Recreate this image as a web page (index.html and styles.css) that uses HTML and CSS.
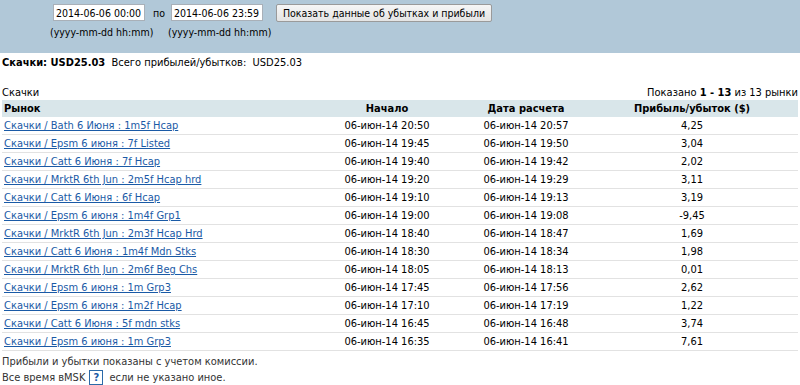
FILE: index.html
```html
<!DOCTYPE html>
<html lang="ru">
<head>
<meta charset="utf-8">
<title>Прибыли и убытки</title>
<link rel="stylesheet" href="styles.css">
</head>
<body>
<div class="band">
  <form class="filter">
    <input class="date" type="text" value="2014-06-06 00:00">
    <span class="sep">по</span>
    <input class="date" type="text" value="2014-06-06 23:59">
    <button class="btn" type="button">Показать данные об убытках и прибыли</button>
    <span class="hint">(yyyy-mm-dd hh:mm)</span>
    <span></span>
    <span class="hint">(yyyy-mm-dd hh:mm)</span>
    <span></span>
  </form>
</div>
<div class="content">
  <div class="summary"><b>Скачки: USD25.03</b>&nbsp; Всего прибылей/убытков:&nbsp; USD25.03</div>
  <div class="caption"><span>Скачки</span><span>Показано <b>1 - 13</b> из 13 рынки</span></div>
  <table class="grid">
    <colgroup><col class="c1"><col class="c2"><col class="c3"><col class="c4"></colgroup>
    <thead>
      <tr><th class="l">Рынок</th><th>Начало</th><th>Дата расчета</th><th>Прибыль/убыток ($)</th></tr>
    </thead>
    <tbody>
      <tr><td class="l"><a href="#">Скачки / Bath 6 Июня : 1m5f Hcap</a></td><td>06-июн-14 20:50</td><td>06-июн-14 20:57</td><td>4,25</td></tr>
      <tr><td class="l"><a href="#">Скачки / Epsm 6 июня : 7f Listed</a></td><td>06-июн-14 19:45</td><td>06-июн-14 19:50</td><td>3,04</td></tr>
      <tr><td class="l"><a href="#">Скачки / Catt 6 Июня : 7f Hcap</a></td><td>06-июн-14 19:40</td><td>06-июн-14 19:42</td><td>2,02</td></tr>
      <tr><td class="l"><a href="#">Скачки / MrktR 6th Jun : 2m5f Hcap hrd</a></td><td>06-июн-14 19:20</td><td>06-июн-14 19:29</td><td>3,11</td></tr>
      <tr><td class="l"><a href="#">Скачки / Catt 6 Июня : 6f Hcap</a></td><td>06-июн-14 19:10</td><td>06-июн-14 19:13</td><td>3,19</td></tr>
      <tr><td class="l"><a href="#">Скачки / Epsm 6 июня : 1m4f Grp1</a></td><td>06-июн-14 19:00</td><td>06-июн-14 19:08</td><td>-9,45</td></tr>
      <tr><td class="l"><a href="#">Скачки / MrktR 6th Jun : 2m3f Hcap Hrd</a></td><td>06-июн-14 18:40</td><td>06-июн-14 18:47</td><td>1,69</td></tr>
      <tr><td class="l"><a href="#">Скачки / Catt 6 Июня : 1m4f Mdn Stks</a></td><td>06-июн-14 18:30</td><td>06-июн-14 18:34</td><td>1,98</td></tr>
      <tr><td class="l"><a href="#">Скачки / MrktR 6th Jun : 2m6f Beg Chs</a></td><td>06-июн-14 18:05</td><td>06-июн-14 18:13</td><td>0,01</td></tr>
      <tr><td class="l"><a href="#">Скачки / Epsm 6 июня : 1m Grp3</a></td><td>06-июн-14 17:45</td><td>06-июн-14 17:56</td><td>2,62</td></tr>
      <tr><td class="l"><a href="#">Скачки / Epsm 6 июня : 1m2f Hcap</a></td><td>06-июн-14 17:10</td><td>06-июн-14 17:19</td><td>1,22</td></tr>
      <tr><td class="l"><a href="#">Скачки / Catt 6 Июня : 5f mdn stks</a></td><td>06-июн-14 16:45</td><td>06-июн-14 16:48</td><td>3,74</td></tr>
      <tr><td class="l"><a href="#">Скачки / Epsm 6 июня : 1m Grp3</a></td><td>06-июн-14 16:35</td><td>06-июн-14 16:41</td><td>7,61</td></tr>
    </tbody>
  </table>
  <div class="notes">
    <div class="note">Прибыли и убытки показаны с учетом комиссии.</div>
    <div class="note"><span>Все время вMSK</span><span class="help">?</span><span>если не указано иное.</span></div>
  </div>
</div>
</body>
</html>
```
FILE: styles.css
```css
html, body {
  margin: 0;
  padding: 0;
  background: #ffffff;
}
body {
  font-family: "DejaVu Sans Condensed", "DejaVu Sans", sans-serif;
  font-size: 11px;
  color: #000;
}
.band {
  background: #b1c8d8;
  height: 53px;
  box-sizing: border-box;
  padding: 4px 0 0 50px;
}
.filter {
  display: grid;
  grid-template-columns: 103px 15px 108px auto;
  grid-template-rows: 17px 14px;
  row-gap: 4px;
  align-items: center;
}
.date {
  box-sizing: border-box;
  width: 92px;
  height: 17px;
  margin: 0 0 0 3px;
  padding: 0 2px;
  border: 1px solid #a9b0b8;
  background: #fff;
  font-family: inherit;
  font-size: 10.5px;
  color: #000;
  outline: none;
}
.sep {
  font-size: 10.5px;
}
.btn {
  justify-self: start;
  box-sizing: border-box;
  height: 18px;
  width: 216px;
  padding: 0 2px;
  border: 1px solid #9a9a9a;
  border-radius: 2px;
  background: linear-gradient(#f6f6f6, #e4e4e4);
  font-family: inherit;
  font-size: 10.5px;
  color: #000;
  white-space: nowrap;
}
.hint {
  font-size: 10.5px;
  line-height: 14px;
  white-space: nowrap;
}
.content {
  padding: 0 2px;
}
.summary {
  margin-top: 3px;
  line-height: 14px;
}
.caption {
  display: flex;
  justify-content: space-between;
  margin-top: 16px;
  line-height: 14px;
}
.grid {
  width: 100%;
  border-collapse: collapse;
}
.c1 { width: 306px; }
.c2 { width: 158px; }
.c3 { width: 120px; }
.c4 { width: auto; }
.grid th {
  background: #d9e6ea;
  height: 17px;
  padding: 0 2px;
  font-weight: bold;
  text-align: center;
}
.grid td {
  height: 17px;
  padding: 0 2px;
  text-align: center;
  border-bottom: 1px solid #e2e2e2;
}
.grid .l {
  text-align: left;
}
.grid a {
  color: #1a5aa6;
  text-decoration: underline;
}
.notes {
  margin-top: 2px;
  color: #333;
}
.note {
  display: flex;
  align-items: center;
  height: 16px;
  line-height: 15px;
}
.help {
  box-sizing: border-box;
  width: 14px;
  height: 15px;
  line-height: 13px;
  border: 1px solid #2b6aa8;
  color: #1a5aa6;
  font-weight: bold;
  text-align: center;
  margin: 0 6px 0 4px;
}
```
